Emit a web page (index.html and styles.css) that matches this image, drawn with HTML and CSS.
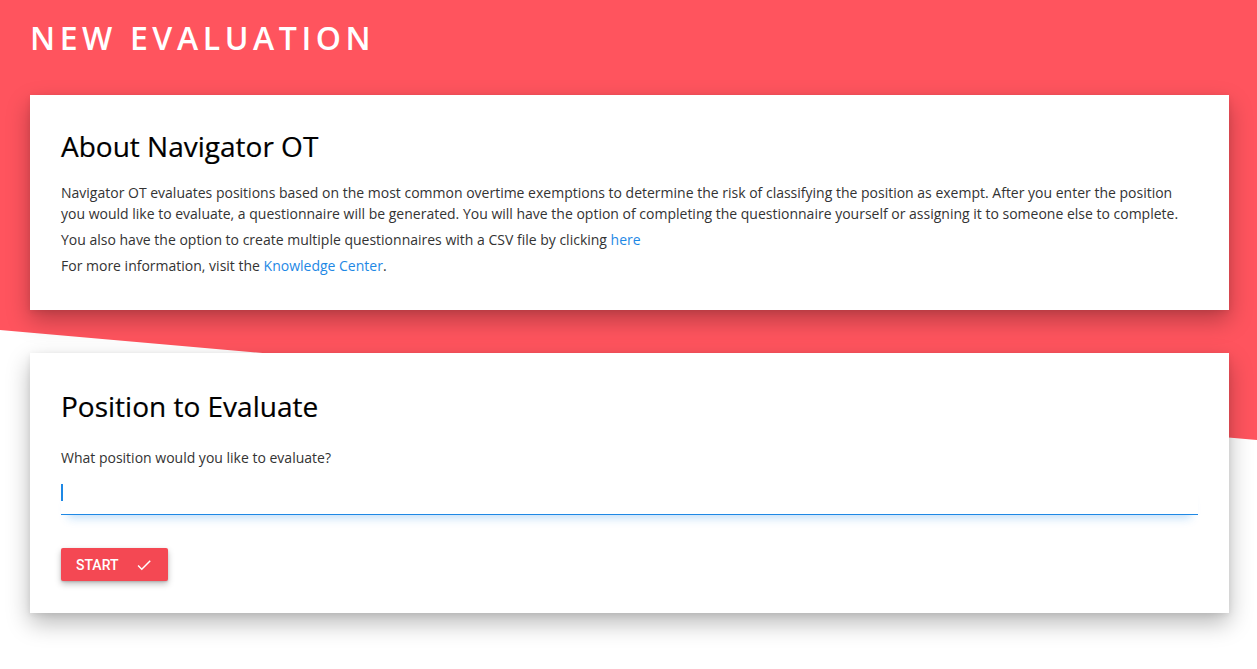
FILE: index.html
```html
<!DOCTYPE html>
<html>
<head>
<meta charset="utf-8">
<link rel="stylesheet" href="styles.css">
</head>
<body>
<div class="bg"></div>
<main class="page">
  <h1 class="page-title">NEW EVALUATION</h1>
  <section class="card about">
    <h2 class="card-title">About Navigator OT</h2>
    <p>Navigator OT evaluates positions based on the most common overtime exemptions to determine the risk of classifying the position as exempt. After you enter the position you would like to evaluate, a questionnaire will be generated. You will have the option of completing the questionnaire yourself or assigning it to someone else to complete.</p>
    <p>You also have the option to create multiple questionnaires with a CSV file by clicking <a href="#">here</a></p>
    <p>For more information, visit the <a href="#">Knowledge Center</a>.</p>
  </section>
  <section class="card position">
    <h2 class="card-title">Position to Evaluate</h2>
    <label class="field-label" for="pos">What position would you like to evaluate?</label>
    <div class="field"><span class="caret"></span></div>
    <button class="btn-start" type="button">START
      <svg class="check" viewBox="0 0 24 24" width="18" height="18"><path d="M9 16.2L4.8 12l-1.4 1.4L9 19 21 7l-1.4-1.4L9 16.2z" fill="#fff"/></svg>
    </button>
  </section>
</main>
</body>
</html>
```
FILE: styles.css
```css
html, body {
  margin: 0;
  padding: 0;
  background: #fff;
}
body {
  font-family: "Open Sans", "Liberation Sans", sans-serif;
  color: #333;
  position: relative;
  min-height: 669px;
  overflow: hidden;
}
.bg {
  position: absolute;
  left: 0;
  top: 0;
  width: 100%;
  height: 440px;
  background: #ff545e;
  clip-path: polygon(0 0, 100% 0, 100% 440px, 0 330px);
  z-index: 0;
}
.page {
  position: relative;
  z-index: 1;
  padding: 0 28px 0 30px;
}
.page-title {
  margin: 0;
  padding: 16px 0 0 0;
  height: 78px;
  box-sizing: border-box;
  color: #fff;
  font-size: 32px;
  font-weight: 600;
  letter-spacing: 4.6px;
  line-height: 44px;
}
.card {
  background: #fff;
  padding: 31px 31px;
  box-shadow: 0 10px 22px rgba(0, 0, 0, 0.28), 0 2px 6px rgba(0, 0, 0, 0.08);
}
.about {
  height: 215px;
  box-sizing: border-box;
  margin-top: 17px;
  padding-top: 32px;
}
.card-title {
  margin: 0;
  font-size: 28px;
  font-weight: 400;
  color: #000;
  line-height: 38px;
  -webkit-text-stroke: 0.2px #000;
}
.about .card-title {
  margin-bottom: 17px;
}
.about p {
  margin: 0 0 5px 0;
  font-size: 14px;
  line-height: 21px;
  color: #333;
}
a {
  color: #1e88e5;
  text-decoration: none;
}
.position {
  margin-top: 43px;
  height: 260px;
  box-sizing: border-box;
  padding-top: 34px;
}
.field-label {
  display: block;
  margin-top: 23px;
  font-size: 14px;
  line-height: 20px;
  color: #333;
}
.field {
  margin-top: 15px;
  height: 31px;
  border-bottom: 1px solid #1e88e5;
  box-shadow: 0 10px 10px -7px rgba(30, 136, 229, 0.28);
  display: flex;
  align-items: flex-start;
}
.caret {
  width: 1.5px;
  height: 17px;
  margin-top: 1px;
  background: #1e88e5;
  margin-left: 0;
}
.btn-start {
  margin-top: 33px;
  width: 107px;
  height: 33px;
  background: #f44853;
  color: #fff;
  border: 0;
  border-radius: 2px;
  font-family: Roboto, "Liberation Sans", sans-serif;
  font-size: 14px;
  font-weight: 500;
  padding: 0 0 0 15px;
  display: flex;
  align-items: center;
  gap: 16px;
  box-shadow: 0 3px 6px rgba(0, 0, 0, 0.25), 0 1px 2px rgba(0, 0, 0, 0.15);
}
.check {
  display: block;
}
```
